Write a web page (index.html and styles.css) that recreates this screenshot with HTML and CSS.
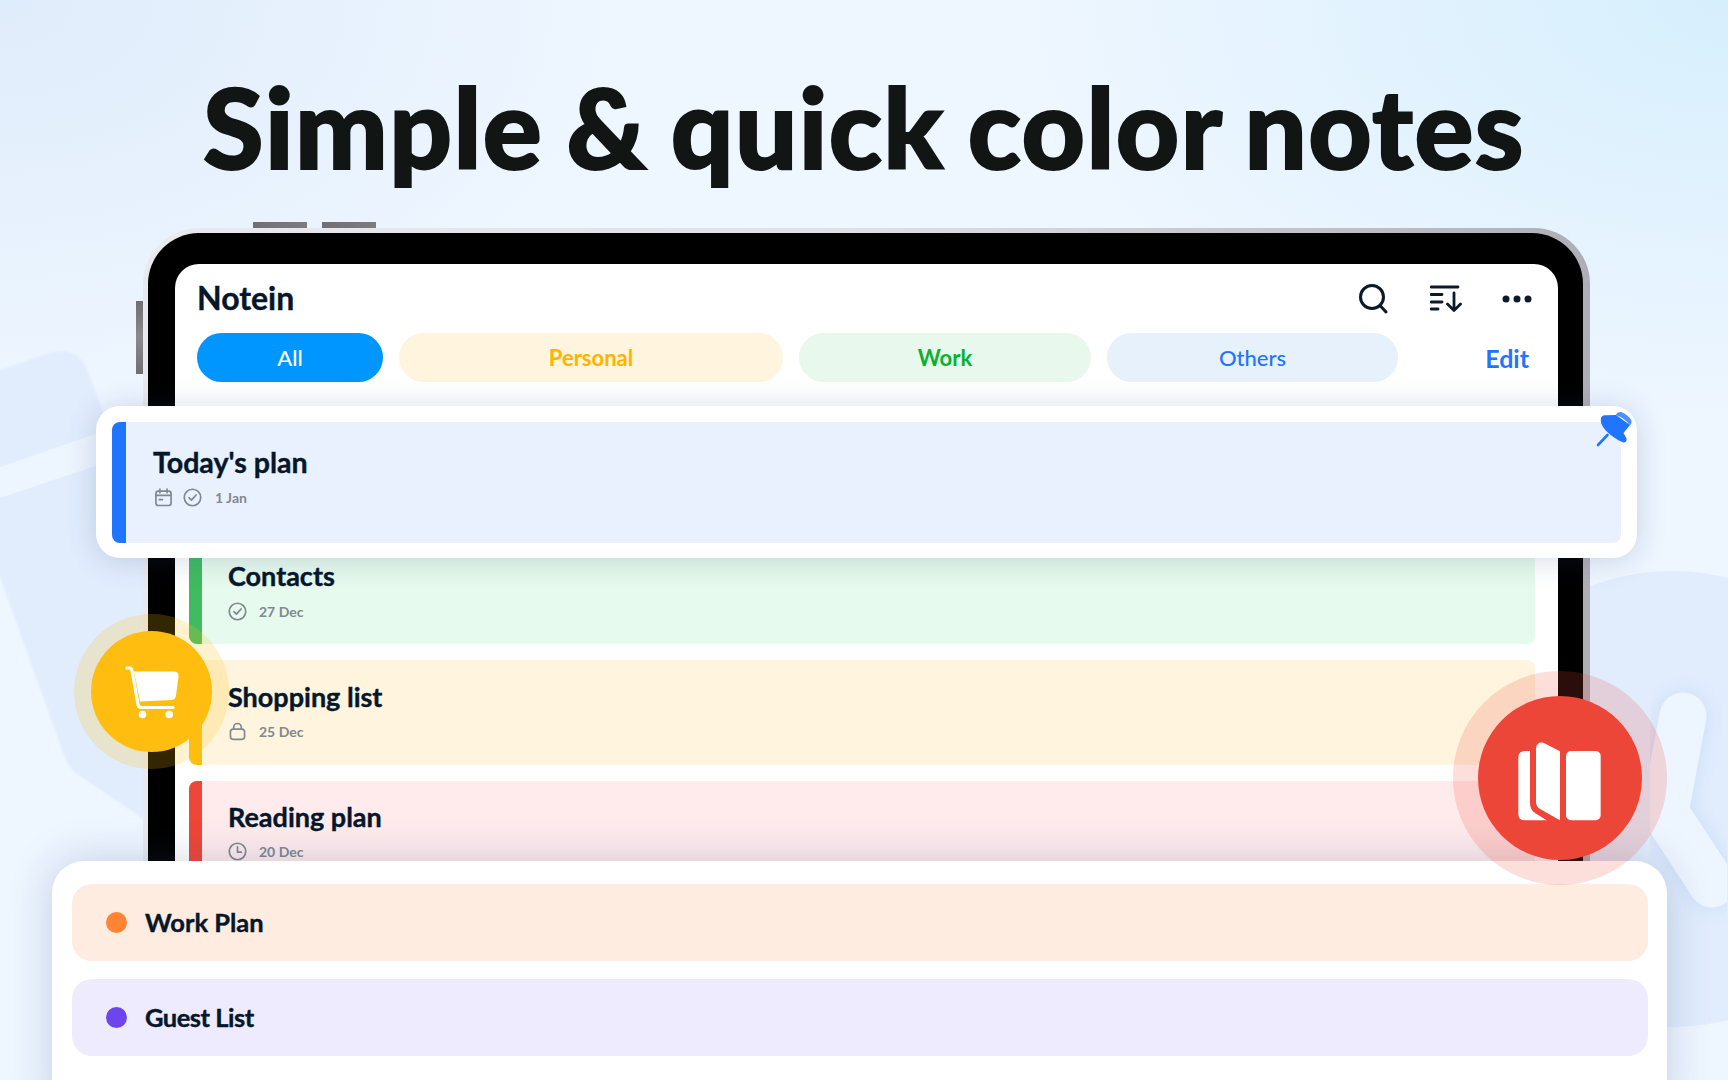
FILE: index.html
```html
<!DOCTYPE html>
<html lang="en">
<head>
<meta charset="utf-8">
<title>Notein</title>
<link rel="stylesheet" href="styles.css">
</head>
<body>
<main class="page">
  <svg class="decor" viewBox="0 0 1728 1080" aria-hidden="true">
    <defs>
      <filter id="soft" x="-20%" y="-20%" width="140%" height="140%"><feGaussianBlur stdDeviation="1.2"/></filter>
      <filter id="glow" x="-30%" y="-30%" width="160%" height="160%"><feDropShadow dx="0" dy="0" stdDeviation="10" flood-color="#a9c8f2" flood-opacity=".45"/></filter>
    </defs>
    <circle class="decor-blob" cx="1672" cy="799" r="228"/>
    <path class="decor-blob" filter="url(#soft)" d="M-20 377 L50 353 Q78 345 88 372 L160 560 L160 830 L80 776 Q68 768 64 755 L0 577 L-20 530 Z"/>
    <path class="decor-band" d="M0 467 L110 429 L110 461 L0 498 Z"/>
    <path class="decor-check" filter="url(#glow)" d="M1683 716 L1665 812 L1712 884"/>
  </svg>

  <h1 class="headline">Simple &amp; quick color notes</h1>

  <section class="tablet">
    <span class="side-btn side-btn-a"></span>
    <span class="side-btn side-btn-b"></span>
    <span class="side-btn side-btn-c"></span>
    <div class="bezel">
      <div class="screen">
        <header class="topbar">
          <div class="brand">Notein</div>
          <div class="tools">
            <svg class="tool-search" viewBox="0 0 30 32"><circle cx="14" cy="14" r="11.5"/><path d="M22.5 23 L28 29"/></svg>
            <svg class="tool-sort" viewBox="0 0 32 28"><path d="M1 2 H28 M1 9.5 H12 M1 17 H12 M1 24 H8 M24 8 V25 M17.5 19 L24 25.5 L30.5 19"/></svg>
            <svg class="tool-more" viewBox="0 0 30 8"><circle cx="4" cy="4" r="3.5"/><circle cx="15" cy="4" r="3.5"/><circle cx="26" cy="4" r="3.5"/></svg>
          </div>
        </header>
        <nav class="chips">
          <span class="chip chip-all">All</span>
          <span class="chip chip-personal">Personal</span>
          <span class="chip chip-work">Work</span>
          <span class="chip chip-others">Others</span>
          <span class="edit">Edit</span>
        </nav>
        <div class="notes">
          <article class="note note-green">
            <span class="note-bar"></span>
            <div class="note-body">
              <h2 class="note-title">Contacts</h2>
              <div class="note-meta">
                <svg class="meta-icon" viewBox="0 0 18 18"><circle cx="9" cy="9" r="7.8"/><path d="M5.6 9.2 L8 11.5 L12.4 6.6"/></svg>
                <span>27 Dec</span>
              </div>
            </div>
          </article>
          <article class="note note-yellow">
            <span class="note-bar"></span>
            <div class="note-body">
              <h2 class="note-title">Shopping list</h2>
              <div class="note-meta">
                <svg class="meta-icon" viewBox="0 0 18 18"><rect x="2.3" y="6.8" width="13.4" height="9.6" rx="2.6"/><path d="M5.4 6.8 V5 A3.6 3.6 0 0 1 12.6 5 V6.8"/></svg>
                <span>25 Dec</span>
              </div>
            </div>
          </article>
          <article class="note note-red">
            <span class="note-bar"></span>
            <div class="note-body note-body-tight">
              <h2 class="note-title">Reading plan</h2>
              <div class="note-meta">
                <svg class="meta-icon" viewBox="0 0 18 18"><circle cx="9" cy="9" r="7.8"/><path d="M9 4.6 V9.6 H12.6"/></svg>
                <span>20 Dec</span>
              </div>
            </div>
          </article>
        </div>
      </div>
    </div>
  </section>

  <article class="pinned">
    <div class="pinned-inner">
      <span class="note-bar pinned-bar"></span>
      <div class="pinned-body">
        <h2 class="note-title pinned-title">Today's plan</h2>
        <div class="note-meta pinned-meta">
          <svg class="meta-icon" viewBox="0 0 18 18"><rect x="1.8" y="3" width="14.4" height="13.6" rx="2.4"/><path d="M1.8 7 H16.2 M5.6 1 V4.4 M12.4 1 V4.4 M5 11 H8"/></svg>
          <svg class="meta-icon" viewBox="0 0 18 18"><circle cx="9" cy="9" r="7.8"/><path d="M5.6 9.2 L8 11.5 L12.4 6.6"/></svg>
          <span class="pinned-date">1 Jan</span>
        </div>
      </div>
    </div>
    <svg class="pin" viewBox="0 0 40 40">
      <path class="pin-needle" d="M2 35 L11.5 25"/>
      <path class="pin-body" d="M5 8 Q6 4.8 9.5 5.2 L20 5 L34 15 L27.5 23 Q29 25.5 30.5 28.5 Q31 32.5 27.5 32.5 Q23 31 16 26 Q8 20 5.4 14 Q4.4 11 5 8 Z"/>
      <path class="pin-cap" d="M19.5 5 Q21.5 1.5 25 2 Q31 4 35 9.5 Q36.5 12.5 34 15.5 Q29 8 19.5 5 Z"/>
    </svg>
  </article>

  <section class="panel">
    <div class="panel-row panel-row-orange"><span class="dot dot-orange"></span><span class="panel-label">Work Plan</span></div>
    <div class="panel-row panel-row-purple"><span class="dot dot-purple"></span><span class="panel-label">Guest List</span></div>
  </section>

  <div class="badge badge-cart">
    <svg class="cart" viewBox="-3.5 1.5 90 100">
      <path class="cart-line" d="M16.5 27.5 H19 Q21 27.5 21.5 30 L27.5 64 Q28 67 31 67 H62.5"/>
      <path class="cart-fill" d="M23.5 31 H63 Q68.5 31 68 36 L65.5 55 Q65 59 61 59.5 L29.5 61 Z"/>
      <circle class="cart-fill" cx="32" cy="74" r="3.8"/>
      <circle class="cart-fill" cx="58.7" cy="74" r="3.8"/>
    </svg>
  </div>
  <div class="badge badge-book">
    <svg class="book" viewBox="0 0 360 330">
      <path class="book-fill" d="M90 84 H75 Q55 84 55 104 V272 Q55 292 75 292 H140 L106 271 Q90 261 90 240 Z"/>
      <path class="book-fill" d="M108 76 Q110 56 130 59 L180 85 V292 L120 258 Q108 250 108 236 Z"/>
      <rect class="book-fill" x="198" y="84" width="104" height="208" rx="15"/>
    </svg>
  </div>
</main>
</body>
</html>
```

FILE: styles.css
```css
* { box-sizing: border-box; }
html, body { margin: 0; padding: 0; }
body { font-family: Lato, "Open Sans", sans-serif; color: #06172b; }

.page {
  position: relative;
  width: 1728px;
  height: 1080px;
  overflow: hidden;
  padding-top: 71px;
  background:
    radial-gradient(700px 420px at 100% 0, #d6effd 0, rgba(214,239,253,0) 100%),
    radial-gradient(620px 400px at 0 0, #dfecfb 0, rgba(223,236,251,0) 100%),
    #eef6ff;
}

.decor { position: absolute; left: 0; top: 0; width: 1728px; height: 1080px; }
.decor-blob { fill: #e1edfd; }
.decor-band { fill: #edf5fe; }
.decor-check { fill: none; stroke: #edf5fe; stroke-width: 47; stroke-linecap: round; stroke-linejoin: round; }

.headline {
  position: relative;
  margin: 0;
  height: 157px;
  font-size: 110px;
  line-height: 110px;
  font-weight: 900;
  letter-spacing: 1.4px;
  word-spacing: -4.4px;
  -webkit-text-stroke: 2px #111514;
  text-align: center;
  color: #111514;
}

.tablet {
  position: relative;
  width: 1447px;
  height: 760px;
  margin-left: 143px;
  padding: 5px 7px 0 5px;
  border-radius: 56px 56px 0 0;
  background: linear-gradient(90deg, #e9eaee 0, #dfe0e5 50%, #aeafb5 100%);
}
.side-btn { position: absolute; background: linear-gradient(90deg, #707074, #7b7b80); }
.side-btn-a { left: 110px; top: -6px; width: 54px; height: 6px; }
.side-btn-b { left: 179px; top: -6px; width: 54px; height: 6px; }
.side-btn-c { left: -7px; top: 73px; width: 7px; height: 73px; background: linear-gradient(180deg, #6f6f73, #8a8a8e 50%, #6f6f73); }

.bezel {
  height: 100%;
  padding: 31px 25px 0 27px;
  border-radius: 51px 51px 0 0;
  background: #000;
}
.screen {
  height: 100%;
  border-radius: 24px 24px 0 0;
  background: #fff;
}

.topbar {
  display: flex;
  align-items: center;
  justify-content: space-between;
  height: 69px;
  padding: 0 26px 0 22px;
}
.brand { font-size: 32px; font-weight: 700; line-height: 1; margin-top: -1px; -webkit-text-stroke: .4px #06172b; }
.tools { display: flex; align-items: center; margin-top: 0; }
.tools svg { display: block; fill: none; stroke: #0b1a2b; stroke-linecap: round; stroke-linejoin: round; }
.tool-search { width: 30px; height: 32px; stroke-width: 3; margin-right: 42px; }
.tool-sort { width: 32px; height: 28px; stroke-width: 2.8; margin-right: 40px; }
.tools .tool-more { width: 30px; height: 8px; fill: #0b1a2b; stroke: none; }

.chips {
  display: flex;
  align-items: center;
  gap: 16px;
  height: 49px;
  padding: 0 29px 0 22px;
}
.chip {
  display: flex;
  align-items: center;
  justify-content: center;
  height: 49px;
  border-radius: 25px;
  font-size: 22px;
  font-weight: 500;
}
.chip-all { width: 186px; background: #0096ff; color: #fff; }
.chip-personal { width: 384px; background: #fff4dd; color: #ffb300; font-weight: 700; }
.chip-work { width: 292px; background: #e8f8ec; color: #0cb02f; font-weight: 700; }
.chip-others { width: 291px; background: #e6f1fb; color: #1f75fe; }
.edit { margin-left: auto; font-size: 25px; font-weight: 700; color: #1f75fe; }

.notes {
  display: flex;
  flex-direction: column;
  gap: 16px;
  margin-top: 157px;
  padding: 0 23px 0 14px;
}
.note {
  display: flex;
  height: 105px;
  border-radius: 8px;
  overflow: hidden;
}
.note-bar { flex: none; width: 13px; }
.note-green { background: #e6faed; }
.note-green .note-bar { background: #41bb61; }
.note-green .note-meta { margin-top: 9px; }
.note-yellow { background: #fff4de; }
.note-yellow .note-bar { background: #ffbe0f; }
.note-red { background: #ffebec; }
.note-red .note-bar { background: #ee4638; }
.note-body { padding: 20px 0 0 26px; }
.note-body-tight { padding-top: 19px; }
.note-title { margin: 0; font-size: 27px; line-height: 34px; font-weight: 700; color: #06172b; -webkit-text-stroke: .4px #06172b; }
.note-meta {
  display: flex;
  align-items: center;
  gap: 12px;
  margin-top: 8px;
  font-size: 14px;
  line-height: 18px;
  font-weight: 700;
  color: #808890;
}
.meta-icon { display: block; flex: none; width: 19px; height: 19px; fill: none; stroke: #808890; stroke-width: 1.6; stroke-linecap: round; stroke-linejoin: round; }

.pinned {
  position: absolute;
  left: 96px;
  top: 406px;
  width: 1541px;
  height: 152px;
  padding: 16px;
  border-radius: 24px;
  background: #fff;
  box-shadow: 0 2px 30px rgba(40, 70, 120, .2);
}
.pinned-inner {
  display: flex;
  height: 121px;
  border-radius: 8px;
  background: #eaf1fe;
  overflow: hidden;
}
.pinned-bar { width: 14px; background: #1f75ff; }
.pinned-body { padding: 23px 0 0 27px; }
.pinned-title { font-size: 28.6px; }
.pinned-meta { gap: 10px; margin-top: 9px; padding-left: 1px; }
.pinned-date { margin-left: 3px; }
.pin { position: absolute; left: 1500px; top: 4px; width: 40px; height: 40px; }
.pin-body { fill: #1f75ff; }
.pin-cap { fill: #4d8fff; }
.pin-needle { fill: none; stroke: #1f75ff; stroke-width: 2.6; stroke-linecap: round; }

.panel {
  position: absolute;
  left: 52px;
  top: 861px;
  width: 1615px;
  height: 260px;
  padding: 23px 19px 0 20px;
  border-radius: 32px;
  background: #fff;
  box-shadow: 0 0 44px rgba(40, 70, 120, .22);
}
.panel-row {
  display: flex;
  align-items: center;
  gap: 18px;
  height: 77px;
  margin-bottom: 18px;
  padding-left: 34px;
  border-radius: 20px;
  font-size: 25.5px;
  font-weight: 700;
  -webkit-text-stroke: .4px #06172b;
}
.panel-label { margin-top: -2px; }
.panel-row-orange { background: #ffece0; }
.panel-row-purple { background: #efebfe; letter-spacing: -.5px; }
.dot { flex: none; width: 21px; height: 21px; border-radius: 50%; }
.dot-orange { background: #ff8534; }
.dot-purple { background: #6d45ee; }

.badge {
  position: absolute;
  display: flex;
  align-items: center;
  justify-content: center;
  border-radius: 50%;
}
.badge-cart { left: 91px; top: 631px; width: 121px; height: 121px; background: #ffbe0f; box-shadow: 0 0 0 17px rgba(255, 190, 15, .2); }
.badge-book { left: 1478px; top: 696px; width: 164px; height: 164px; background: #ec4638; box-shadow: 0 0 0 25px rgba(239, 71, 56, .18); }
.cart { width: 90px; height: 100px; }
.cart-line { fill: none; stroke: #fff; stroke-width: 3.2; stroke-linecap: round; stroke-linejoin: round; }
.cart-fill, .book-fill { fill: #fff; }
.book { flex: none; width: 120px; height: 110px; }
```
